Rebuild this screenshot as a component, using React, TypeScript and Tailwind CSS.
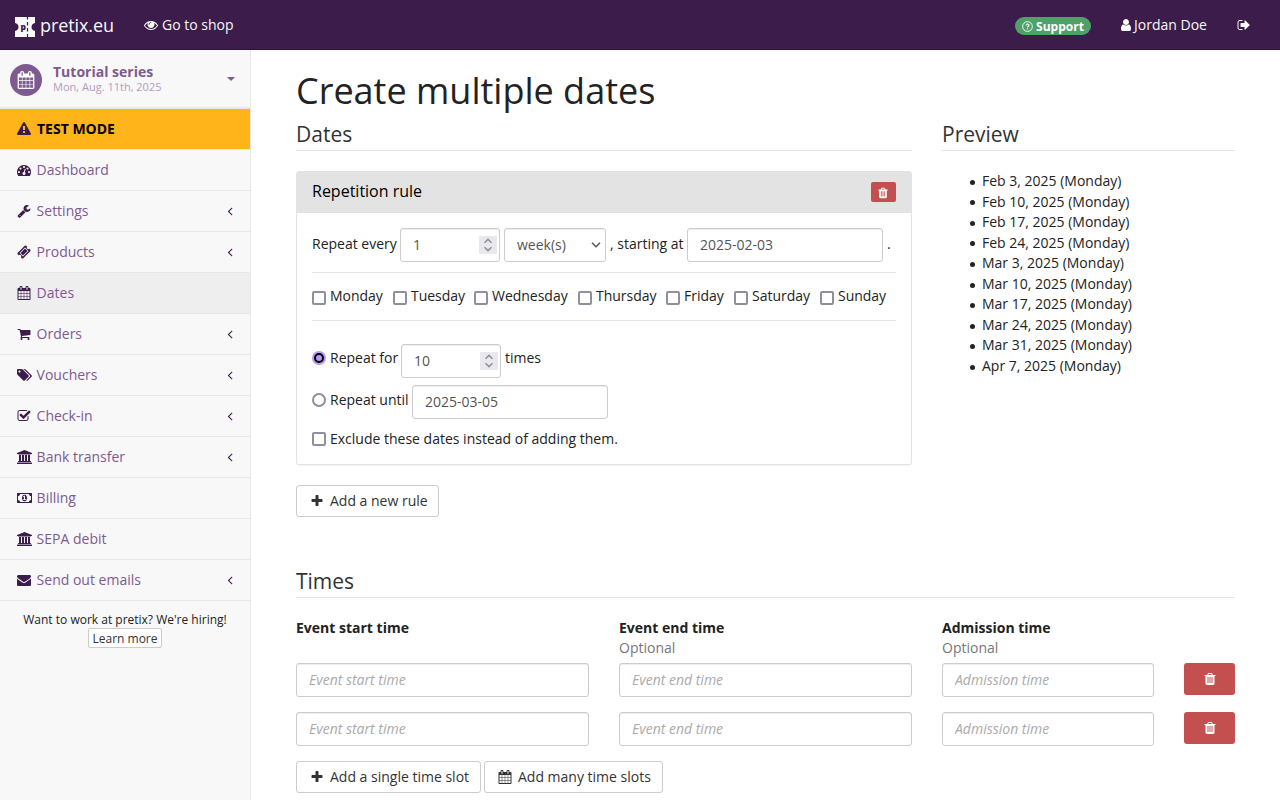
import type { ReactNode } from "react";

const paths = {
  eye: "M1664 960q-152-236-381-353 61 104 61 225 0 185-131.5 316.5t-316.5 131.5-316.5-131.5-131.5-316.5q0-121 61-225-229 117-381 353 133 205 333.5 326.5t434.5 121.5 434.5-121.5 333.5-326.5zm-720-384q0-20-14-34t-34-14q-125 0-214.5 89.5t-89.5 214.5q0 20 14 34t34 14 34-14 14-34q0-86 61-147t147-61q20 0 34-14t14-34zm848 384q0 34-20 69-140 230-376.5 368.5t-499.5 138.5-499.5-139-376.5-368q-20-35-20-69t20-69q140-229 376.5-368t499.5-139 499.5 139 376.5 368q20 35 20 69z",
  plus: "M1600 736v192q0 40-28 68t-68 28h-416v416q0 40-28 68t-68 28h-192q-40 0-68-28t-28-68v-416h-416q-40 0-68-28t-28-68v-192q0-40 28-68t68-28h416v-416q0-40 28-68t68-28h192q40 0 68 28t28 68v416h416q40 0 68 28t28 68z",
  angleLeft: "M1203 544q0 13-10 23l-393 393 393 393q10 10 10 23t-10 23l-50 50q-10 10-23 10t-23-10l-466-466q-10-10-10-23t10-23l466-466q10-10 23-10t23 10l50 50q10 10 10 23z",
  envelope: "M1792 710v794q0 66-47 113t-113 47h-1472q-66 0-113-47t-47-113v-794q44 49 101 87 362 246 497 345 57 42 92.5 65.5t94.5 48 110 24.5h2q51 0 110-24.5t94.5-48 92.5-65.5q170-123 498-345 57-39 100-87zm0-294q0 79-49 151t-122 123q-376 261-468 325-10 7-42.5 31t-54 38.5-52 32.5-57.5 27-50 9h-2q-23 0-50-9t-57.5-27-52-32.5-54-38.5-42.5-31q-91-64-262-182.5t-205-142.5q-62-42-117-115.5t-55-136.5q0-78 41.5-130t118.5-52h1472q65 0 112.5 47t47.5 113z",
  cart: "M704 1536q0 52-38 90t-90 38-90-38-38-90 38-90 90-38 90 38 38 90zm896 0q0 52-38 90t-90 38-90-38-38-90 38-90 90-38 90 38 38 90zm128-1088v512q0 24-16.5 42.5t-40.5 21.5l-1044 122q13 60 13 70 0 16-24 64h920q26 0 45 19t19 45-19 45-45 19h-1024q-26 0-45-19t-19-45q0-11 8-31.5t16-36 21.5-40 15.5-29.5l-177-823h-204q-26 0-45-19t-19-45 19-45 45-19h256q16 0 28.5 6.5t19.5 15.5 13 24.5 8 26 5.5 29.5 4.5 26h1201q26 0 45 19t19 45z",
  tags: "M448 448q0-53-37.5-90.5t-90.5-37.5-90.5 37.5-37.5 90.5 37.5 90.5 90.5 37.5 90.5-37.5 37.5-90.5zm1067 576q0 53-37 90l-491 492q-39 37-91 37-53 0-90-37l-715-716q-38-37-64.5-101t-26.5-117v-416q0-52 38-90t90-38h416q53 0 117 26.5t102 64.5l715 714q37 39 37 91zm384 0q0 53-37 90l-491 492q-39 37-91 37-36 0-59-14t-53-45l470-470q37-37 37-90 0-52-37-91l-715-714q-38-38-102-64.5t-117-26.5h224q53 0 117 26.5t102 64.5l715 714q37 39 37 91z",
  wrench: "M448 1472q0-26-19-45t-45-19-45 19-19 45 19 45 45 19 45-19 19-45zm644-420l-682 682q-37 37-90 37-52 0-91-37l-106-108q-38-36-38-90 0-53 38-91l681-681q39 98 114.5 173.5t173.5 114.5zm634-435q0 39-23 106-47 134-164.5 217.5t-258.5 83.5q-185 0-316.5-131.5t-131.5-316.5 131.5-316.5 316.5-131.5q58 0 121.5 16.5t107.5 46.5q16 11 16 28t-16 28l-293 169v224l193 107q5-3 79-48.5t135.5-81 70.5-35.5q15 0 23.5 10t8.5 25z",
  gauge: "M384 1152q0-53-37.5-90.5t-90.5-37.5-90.5 37.5-37.5 90.5 37.5 90.5 90.5 37.5 90.5-37.5 37.5-90.5zm192-448q0-53-37.5-90.5t-90.5-37.5-90.5 37.5-37.5 90.5 37.5 90.5 90.5 37.5 90.5-37.5 37.5-90.5zm428 481l101-382q6-26-7.5-48.5t-38.5-29.5-48 6.5-30 39.5l-101 382q-60 5-107 43.5t-63 98.5q-20 77 20 146t117 89 146-20 89-117q16-60-6-117t-72-91zm660-33q0-53-37.5-90.5t-90.5-37.5-90.5 37.5-37.5 90.5 37.5 90.5 90.5 37.5 90.5-37.5 37.5-90.5zm-640-640q0-53-37.5-90.5t-90.5-37.5-90.5 37.5-37.5 90.5 37.5 90.5 90.5 37.5 90.5-37.5 37.5-90.5zm448 192q0-53-37.5-90.5t-90.5-37.5-90.5 37.5-37.5 90.5 37.5 90.5 90.5 37.5 90.5-37.5 37.5-90.5zm320 448q0 261-141 483-19 29-54 29h-1402q-35 0-54-29-141-221-141-483 0-182 71-348t191-286 286-191 348-71 348 71 286 191 191 286 71 348z",
  ticket: "M1024 452l316 316-572 572-316-316zm-211 979l618-618q19-19 19-45t-19-45l-362-362q-18-18-45-18t-45 18l-618 618q-19 19-19 45t19 45l362 362q18 18 45 18t45-18zm889-637l-907 908q-37 37-90.5 37t-90.5-37l-126-126q56-56 56-136t-56-136-136-56-136 56l-125-126q-37-37-37-90.5t37-90.5l907-906q37-37 90.5-37t90.5 37l125 125q-56 56-56 136t56 136 136 56 136-56l126 125q37 37 37 90.5t-37 90.5z",
  checkSquare: "M1472 930v318q0 119-84.5 203.5t-203.5 84.5h-832q-119 0-203.5-84.5t-84.5-203.5v-832q0-119 84.5-203.5t203.5-84.5h832q63 0 117 25 15 7 18 23 3 17-9 29l-49 49q-10 10-23 10-3 0-9-2-23-6-45-6h-832q-66 0-113 47t-47 113v832q0 66 47 113t113 47h832q66 0 113-47t47-113v-254q0-13 9-22l64-64q10-10 23-10 6 0 12 3 20 8 20 29zm231-489l-814 814q-24 24-57 24t-57-24l-430-430q-24-24-24-57t24-57l110-110q24-24 57-24t57 24l263 263 647-647q24-24 57-24t57 24l110 110q24 24 24 57t-24 57z",
  bank: "M960 0l960 384v128h-128q0 26-20.5 45t-48.5 19h-1526q-28 0-48.5-19t-20.5-45h-128v-128zm-704 640h256v768h128v-768h256v768h128v-768h256v768h128v-768h256v768h59q28 0 48.5 19t20.5 45v64h-1664v-64q0-26 20.5-45t48.5-19h59v-768zm1595 960q28 0 48.5 19t20.5 45v128h-1920v-128q0-26 20.5-45t48.5-19h1782z",
  money: "M768 1152h384v-96h-128v-448h-114l-148 137 77 80q42-37 55-57h2v288h-128v96zm512-256q0 70-21 142t-59.5 134-101.5 101-138 39-138-39-101.5-101-59.5-134-21-142 21-142 59.5-134 101.5-101 138-39 138 39 101.5 101 59.5 134 21 142zm512 256v-512q-106 0-181-75t-75-181h-1152q0 106-75 181t-181 75v512q106 0 181 75t75 181h1152q0-106 75-181t181-75zm128-832v1152q0 26-19 45t-45 19h-1792q-26 0-45-19t-19-45v-1152q0-26 19-45t45-19h1792q26 0 45 19t19 45z",
  warning: "M1024 1375v-190q0-14-9.5-23.5t-22.5-9.5h-192q-13 0-22.5 9.5t-9.5 23.5v190q0 14 9.5 23.5t22.5 9.5h192q13 0 22.5-9.5t9.5-23.5zm-2-374l18-459q0-12-10-19-13-11-24-11h-220q-11 0-24 11-10 7-10 21l17 457q0 10 10 16.5t24 6.5h185q14 0 23.5-6.5t10.5-16.5zm-14-934l768 1408q35 63-2 126-17 29-46.5 46t-63.5 17h-1536q-34 0-63.5-17t-46.5-46q-37-63-2-126l768-1408q17-31 47-49t65-18 65 18 47 49z",
  user: "M1536 1399q0 109-62.5 187t-150.5 78h-854q-88 0-150.5-78t-62.5-187q0-85 8.5-160.5t31.5-152 58.5-131 94-89 134.5-34.5q131 128 313 128t313-128q76 0 134.5 34.5t94 89 58.5 131 31.5 152 8.5 160.5zm-256-887q0 159-112.5 271.5t-271.5 112.5-271.5-112.5-112.5-271.5 112.5-271.5 271.5-112.5 271.5 112.5 112.5 271.5z",
  signOut: "M704 1440q0 4 1 20t.5 26.5-3 23.5-10 19.5-20.5 6.5h-320q-119 0-203.5-84.5t-84.5-203.5v-704q0-119 84.5-203.5t203.5-84.5h320q13 0 22.5 9.5t9.5 22.5q0 4 1 20t.5 26.5-3 23.5-10 19.5-20.5 6.5h-320q-66 0-113 47t-47 113v704q0 66 47 113t113 47h312l11.5 1 11.5 3 8 5.5 7 9 2 13.5zm928-544q0 26-19 45l-544 544q-19 19-45 19t-45-19-19-45v-288h-448q-26 0-45-19t-19-45v-384q0-26 19-45t45-19h448v-288q0-26 19-45t45-19 45 19l544 544q19 19 19 45z",
  trash: "M704 1376v-704q0-14-9-23t-23-9h-64q-14 0-23 9t-9 23v704q0 14 9 23t23 9h64q14 0 23-9t9-23zm256 0v-704q0-14-9-23t-23-9h-64q-14 0-23 9t-9 23v704q0 14 9 23t23 9h64q14 0 23-9t9-23zm256 0v-704q0-14-9-23t-23-9h-64q-14 0-23 9t-9 23v704q0 14 9 23t23 9h64q14 0 23-9t9-23zm-544-992h448l-48-117q-7-9-17-11h-317q-10 2-17 11zm928 32v64q0 14-9 23t-23 9h-96v948q0 83-47 143.5t-113 60.5h-832q-66 0-113-58.5t-47-141.5v-952h-96q-14 0-23-9t-9-23v-64q0-14 9-23t23-9h309l70-167q15-37 54-63t79-26h320q40 0 79 26t54 63l70 167h309q14 0 23 9t9 23z",
  calendar: "M192 1664h288v-288h-288v288zm352 0h320v-288h-320v288zm-352-352h288v-320h-288v320zm352 0h320v-320h-320v320zm-352-384h288v-288h-288v288zm736 736h320v-288h-320v288zm-384-736h320v-288h-320v288zm768 736h288v-288h-288v288zm-384-352h320v-320h-320v320zm-352-864v-288q0-13-9.5-22.5t-22.5-9.5h-64q-13 0-22.5 9.5t-9.5 22.5v288q0 13 9.5 22.5t22.5 9.5h64q13 0 22.5-9.5t9.5-22.5zm736 864h288v-320h-288v320zm-384-384h320v-288h-320v288zm384 0h288v-288h-288v288zm32-480v-288q0-13-9.5-22.5t-22.5-9.5h-64q-13 0-22.5 9.5t-9.5 22.5v288q0 13 9.5 22.5t22.5 9.5h64q13 0 22.5-9.5t9.5-22.5zm384-64v1280q0 52-38 90t-90 38h-1408q-52 0-90-38t-38-90v-1280q0-52 38-90t90-38h128v-96q0-66 47-113t113-47h64q66 0 113 47t47 113v96h384v-96q0-66 47-113t113-47h64q66 0 113 47t47 113v96h128q52 0 90 38t38 90z",
};

type IconName = keyof typeof paths;

const wide: IconName[] = ["bank", "money", "tags"];

function Icon({ name, className = "h-[14px]" }: { name: IconName; className?: string }) {
  return (
    <svg
      viewBox={wide.includes(name) ? "0 0 1920 1792" : "0 0 1792 1792"}
      className={"shrink-0 fill-current " + className}
      aria-hidden="true"
    >
      <path d={paths[name]} />
    </svg>
  );
}

const nav: { icon: IconName; label: string; more?: boolean; active?: boolean }[] = [
  { icon: "gauge", label: "Dashboard" },
  { icon: "wrench", label: "Settings", more: true },
  { icon: "ticket", label: "Products", more: true },
  { icon: "calendar", label: "Dates", active: true },
  { icon: "cart", label: "Orders", more: true },
  { icon: "tags", label: "Vouchers", more: true },
  { icon: "checkSquare", label: "Check-in", more: true },
  { icon: "bank", label: "Bank transfer", more: true },
  { icon: "money", label: "Billing" },
  { icon: "bank", label: "SEPA debit" },
  { icon: "envelope", label: "Send out emails", more: true },
];

const preview = [
  "Feb 3, 2025 (Monday)",
  "Feb 10, 2025 (Monday)",
  "Feb 17, 2025 (Monday)",
  "Feb 24, 2025 (Monday)",
  "Mar 3, 2025 (Monday)",
  "Mar 10, 2025 (Monday)",
  "Mar 17, 2025 (Monday)",
  "Mar 24, 2025 (Monday)",
  "Mar 31, 2025 (Monday)",
  "Apr 7, 2025 (Monday)",
];

const weekdays: [string, string][] = [
  ["Monday", "w-[81px]"],
  ["Tuesday", "w-[81px]"],
  ["Wednesday", "w-[104px]"],
  ["Thursday", "w-[88px]"],
  ["Friday", "w-[68px]"],
  ["Saturday", "w-[86px]"],
  ["Sunday", "w-[66px]"],
];

const field =
  "h-[34px] shrink-0 rounded-[3px] border border-[#ccc] bg-white px-3 text-[14px] text-[#555] shadow-[inset_0_1px_1px_rgba(0,0,0,0.075)] outline-none placeholder:italic placeholder:text-[#aaa] placeholder:opacity-100";

function NumberField({ value }: { value: string }) {
  return (
    <div className={field + " flex w-[100px] items-center pr-[2px]"}>
      <input defaultValue={value} className="w-0 grow outline-none" />
      <span className="flex h-[18px] w-[18px] items-center justify-center bg-[#e9e9ed]">
        <svg viewBox="0 0 18 18" className="size-[18px] fill-none stroke-[#8f8f9d]" strokeWidth="1.5">
          <path d="M5.5 6.7 9 3.4l3.5 3.3M5.5 11.3 9 14.6l3.5-3.3" />
        </svg>
      </span>
    </div>
  );
}

function Box() {
  return <span className="size-[14px] shrink-0 rounded-[2px] border-2 border-[#8f8f9d] bg-white" />;
}

function Legend({ children }: { children: ReactNode }) {
  return (
    <h2 className="h-8 border-b border-[#e5e5e5] text-[21px] leading-[30px] text-[#333]">{children}</h2>
  );
}

function Btn({ icon, children, className }: { icon: IconName; children: ReactNode; className: string }) {
  return (
    <button
      className={
        "flex h-8 items-center rounded-[3px] border border-[#ccc] bg-white pl-[11px] text-[#333] whitespace-nowrap " +
        className
      }
    >
      <span className="mr-1 flex w-[18px] justify-center">
        <Icon name={icon} />
      </span>
      {children}
    </button>
  );
}

function TimeRow() {
  return (
    <div className="flex">
      <input placeholder="Event start time" className={field + " mr-[30px] w-[293px] pb-[2px]"} />
      <input placeholder="Event end time" className={field + " mr-[30px] w-[293px] pb-[2px]"} />
      <input placeholder="Admission time" className={field + " mr-[30px] w-[212px] pb-[2px]"} />
      <button className="flex h-8 w-[51px] items-center justify-center rounded-[3px] bg-[#c44f4f] text-white">
        <Icon name="trash" />
      </button>
    </div>
  );
}

export default function App() {
  return (
    <div className="flex h-[800px] w-[1280px] flex-col overflow-hidden bg-white font-['Open_Sans',sans-serif] text-[14px] leading-5 text-[#222]">
      <header className="flex h-[50px] shrink-0 items-center border-b border-[#2f163b] bg-[#3b1c4a] text-[#f8f8f8]">
        <svg viewBox="0 0 20 20" className="mt-[5px] ml-[15px] size-5 shrink-0">
          <path
            fill="#f8f8f8"
            d="M0 0h20v6c-2 .3-3.500 2-3.500 4s1.500 3.700 3.500 4v6H0v-6c2-.3 3.500-2 3.500-4S2 6.300 0 6z"
          />
          <path d="M12.500 0v20" stroke="#3b1c4a" strokeWidth="1.200" strokeDasharray="3.500 2.500" strokeDashoffset="1" />
          <text x="5.400" y="12.600" fontSize="8.500" fontWeight="800" fill="#3b1c4a">
            p
          </text>
        </svg>
        <span className="ml-[5px] w-[79px] text-[18px] tracking-[-0.1px]">pretix.eu</span>
        <span className="ml-[25px] flex items-center gap-1">
          <Icon name="eye" />
          Go to shop
        </span>
        <span className="mt-[3px] ml-auto flex h-[18px] w-[76px] items-center justify-center gap-[3px] rounded-full bg-[#50a167] text-[12px] font-bold text-white">
          <svg viewBox="0 0 12 12" className="size-[11px]" aria-hidden="true">
            <circle cx="6" cy="6" r="5.300" fill="none" stroke="currentColor" strokeWidth="1" />
            <path d="M4.300 4.700c.3-1 1-1.400 1.700-1.400 1 0 1.700.6 1.700 1.400 0 1.100-1.700 1.100-1.700 2.300" fill="none" stroke="currentColor" strokeWidth="1.200" />
            <path d="M5.400 7.900h1.200v1.200H5.400z" fill="currentColor" />
          </svg>
          <span className="pt-px">Support</span>
        </span>
        <span className="ml-[28px] flex items-center">
          <Icon name="user" />
          <span className="ml-[1px] w-[75px] whitespace-nowrap">Jordan Doe</span>
        </span>
        <span className="mr-[29px] ml-[28px]">
          <Icon name="signOut" />
        </span>
      </header>

      <div className="flex min-h-0 grow">
        <aside className="flex w-[251px] shrink-0 flex-col border-r border-[#e7e7e7] bg-[#f8f8f8]">
          <div className="flex h-[59px] shrink-0 items-center border-b-2 border-[#e7e7e7] pl-[10px]">
            <span className="mt-[2px] flex size-8 items-center justify-center rounded-full bg-[#7f5a91] text-white">
              <Icon name="calendar" className="h-[18px]" />
            </span>
            <span className="ml-[11px] grow pb-[2px]">
              <strong className="block leading-[17px] text-[#7f5a91]">Tutorial series</strong>
              <span className="block text-[11px] leading-[13px] text-[#b29cbd]">Mon, Aug. 11th, 2025</span>
            </span>
            <svg viewBox="0 0 8 4" className="mr-[15px] h-1 w-2 fill-[#7f5a91]">
              <path d="M0 0h8L4 4z" />
            </svg>
          </div>
          <div className="flex h-[41px] shrink-0 items-center border-b border-[#e7e7e7] bg-[#ffb419] pl-[15px] font-bold text-black">
            <span className="mr-1 flex w-[18px] justify-center text-[#3b1c4a]">
              <Icon name="warning" />
            </span>
            TEST MODE
          </div>
          <nav>
            {nav.map((n) => (
              <a
                key={n.label}
                className={
                  "flex h-[41px] items-center border-b border-[#e7e7e7] pl-[15px] text-[#7f5a91] " +
                  (n.active ? "bg-[#eee]" : "")
                }
              >
                <span className="mr-[3.600px] flex w-[18px] justify-center text-[#3b1c4a]">
                  <Icon name={n.icon} />
                </span>
                <span className="grow">{n.label}</span>
                {n.more && (
                  <span className="mr-[13px] text-[#3b1c4a]">
                    <Icon name="angleLeft" />
                  </span>
                )}
              </a>
            ))}
          </nav>
          <div className="flex flex-col items-center pt-[10px] text-[12px] leading-[17px]">
            <span>Want to work at pretix? We're hiring!</span>
            <button className="h-5 w-[74px] rounded-[2px] border border-[#ccc] bg-white text-[#333]">
              Learn more
            </button>
          </div>
        </aside>

        <main className="w-[984px] shrink-0 pt-[21px] pl-[45px]">
          <h1 className="h-[48px] text-[36px] leading-[40px]">Create multiple dates</h1>
          <div className="flex justify-between">
            <section className="w-[616px]">
              <Legend>Dates</Legend>
              <div className="mt-5 h-[294px] rounded-[3px] border border-[#e3e3e3] shadow-[0_1px_1px_rgba(0,0,0,0.05)]">
                <div className="flex h-[41px] items-center justify-between bg-[#e3e3e3] px-[15px] text-[16px] text-black">
                  <span className="mb-1">Repetition rule</span>
                  <button className="mb-px flex h-5 w-[25px] items-center justify-center rounded-[2px] bg-[#c44f4f] text-white">
                    <Icon name="trash" className="mt-px mr-px h-3" />
                  </button>
                </div>
                <div className="px-[15px]">
                  <div className="flex h-[60px] items-center border-b border-[#e5e5e5] pt-[5px]">
                    <span className="w-[88px] pb-[3px]">Repeat every</span>
                    <NumberField value="1" />
                    <div className={field + " ml-1 flex w-[102px] items-center justify-between pr-1"}>
                      week(s)
                      <svg viewBox="0 0 10 6" className="h-[6px] w-[10px] fill-none stroke-[#555]" strokeWidth="1.500">
                        <path d="M1 .8 5 4.800 9 .8" />
                      </svg>
                    </div>
                    <span className="ml-1 w-[77px] pb-[3px] whitespace-nowrap">, starting at</span>
                    <input defaultValue="2025-02-03" className={field + " w-[196px] pb-[2px]"} />
                    <span className="ml-1 pb-[3px]">.</span>
                  </div>
                  <div className="flex h-[48px] items-center border-b border-[#e5e5e5]">
                    {weekdays.map(([day, width]) => (
                      <label key={day} className={"flex shrink-0 items-center gap-1 " + width}>
                        <span className="mt-[3px] flex">
                          <Box />
                        </span>
                        <span className="pb-[2px] tracking-[-0.02px]">{day}</span>
                      </label>
                    ))}
                  </div>
                  <div className="mt-[23px] flex h-[34px] items-center">
                    <span className="mb-[6px] flex size-[14px] items-center justify-center rounded-full bg-[#b899f5]">
                      <span className="size-[10px] rounded-full border-2 border-black bg-[#b899f5]" />
                    </span>
                    <span className="ml-1 w-[71px] pb-[6px]">Repeat for</span>
                    <NumberField value="10" />
                    <span className="ml-1 pb-[6px]">times</span>
                  </div>
                  <div className="mt-[7px] flex h-[34px] items-center">
                    <span className="mb-[4px] size-[14px] rounded-full border-2 border-[#8f8f9d]" />
                    <span className="ml-1 w-[82px] pb-[4px]">Repeat until</span>
                    <input defaultValue="2025-03-05" className={field + " w-[196px] pb-[2px]"} />
                  </div>
                  <label className="mt-[10px] flex items-center gap-1">
                    <Box />
                    Exclude these dates instead of adding them.
                  </label>
                </div>
              </div>
              <div className="mt-5">
                <Btn icon="plus" className="w-[143px]">Add a new rule</Btn>
              </div>
            </section>
            <section className="w-[293px]">
              <Legend>Preview</Legend>
              <ul className="mt-5 pl-7 leading-[20.550px]">
                {preview.map((d) => (
                  <li key={d} className="flex items-center gap-[7px]">
                    <span className="mt-[2px] size-[5px] rounded-full bg-[#222]" />
                    {d}
                  </li>
                ))}
              </ul>
            </section>
          </div>

          <section className="mt-[49px]">
            <Legend>Times</Legend>
            <div className="mt-5 flex h-[45px] gap-[30px]">
              <strong className="w-[293px]">Event start time</strong>
              <div className="w-[293px]">
                <strong className="block">Event end time</strong>
                <span className="text-[#777]">Optional</span>
              </div>
              <div>
                <strong className="block">Admission time</strong>
                <span className="text-[#777]">Optional</span>
              </div>
            </div>
            <div className="flex flex-col gap-[15px]">
              <TimeRow />
              <TimeRow />
              <div className="flex gap-[3px]">
                <Btn icon="plus" className="w-[185px]">Add a single time slot</Btn>
                <Btn icon="calendar" className="w-[179px]">Add many time slots</Btn>
              </div>
            </div>
          </section>
        </main>
      </div>
    </div>
  );
}
